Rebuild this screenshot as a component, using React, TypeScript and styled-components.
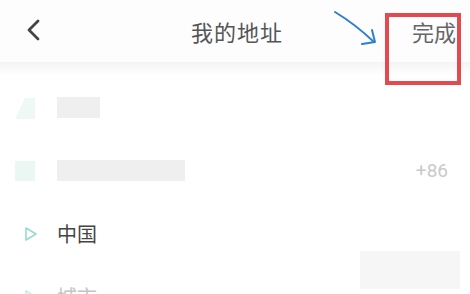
import React from "react";
import styled, { createGlobalStyle } from "styled-components";

const Global = createGlobalStyle`
  html, body { margin: 0; padding: 0; background: #ffffff; }
  body { font-family: "Noto Sans CJK SC", "Noto Sans", sans-serif; }
`;

const Screen = styled.div`
  position: relative;
  width: 470px;
  height: 294px;
  overflow: hidden;
  background: #ffffff;
`;

const Header = styled.div`
  height: 62px;
  display: grid;
  grid-template-columns: 80px 1fr 80px;
  align-items: center;
  background: #fdfdfd;
`;

const Back = styled.div`
  padding-left: 25px;
  padding-bottom: 2px;
  display: flex;
  align-items: center;
`;

const Title = styled.div`
  text-align: center;
  font-size: 22px;
  color: #555555;
  letter-spacing: 1px;
  padding-left: 4px;
`;

const Done = styled.div`
  text-align: right;
  padding-right: 14px;
  font-size: 22px;
  color: #666666;
`;

const Shade = styled.div`
  height: 14px;
  background: linear-gradient(#f4f4f4, #fbfbfb 60%, #ffffff);
`;

const List = styled.div`
  display: flex;
  flex-direction: column;
`;

const Row = styled.div`
  height: 63px;
  display: flex;
  align-items: center;
  padding: 0 22px 0 15px;
`;

const IconCell = styled.div`
  width: 42px;
  display: flex;
  align-items: center;
`;

const Blob = styled.div<{ $w: number }>`
  width: ${(p) => p.$w}px;
  height: 21px;
  background: #efefef;
`;

const Label = styled.div<{ $faint?: boolean }>`
  font-size: 20px;
  color: ${(p) => (p.$faint ? "#c4c4c4" : "#454545")};
`;

const Prefix = styled.div`
  margin-left: auto;
  font-family: Roboto, "Noto Sans", sans-serif;
  font-size: 19px;
  color: #c9c9c9;
`;

const Highlight = styled.div`
  position: absolute;
  left: 385px;
  top: 13px;
  width: 68px;
  height: 64px;
  border: 4px solid #e24a4f;
`;

const Arrow = styled.svg`
  position: absolute;
  left: 330px;
  top: 8px;
`;

const Redact = styled.div`
  position: absolute;
  left: 360px;
  top: 251px;
  width: 100px;
  height: 38px;
  background: #f6f6f6;
`;

const Tri = ({ faint }: { faint?: boolean }) => (
  <svg width="14" height="16" viewBox="0 0 14 16" style={{ marginLeft: 9 }}>
    <path
      d="M2 2 L12 8 L2 14 Z"
      fill="none"
      stroke={faint ? "#c7ece7" : "#9ad9d2"}
      strokeWidth="1.6"
      strokeLinejoin="round"
    />
  </svg>
);

export default function App() {
  return (
    <>
      <Global />
      <Screen>
        <Header>
          <Back>
            <svg width="16" height="24" viewBox="0 0 16 24">
              <path
                d="M13 3 L4 12 L13 21"
                fill="none"
                stroke="#444"
                strokeWidth="2.8"
                strokeLinecap="round"
                strokeLinejoin="round"
              />
            </svg>
          </Back>
          <Title>我的地址</Title>
          <Done>完成</Done>
        </Header>
        <Shade />
        <List>
          <Row>
            <IconCell>
              <svg width="20" height="22" viewBox="0 0 20 22">
                <path d="M10 1 L20 1 L20 22 L0 22 Z" fill="#eef8f5" />
              </svg>
            </IconCell>
            <Blob $w={43} />
          </Row>
          <Row>
            <IconCell>
              <svg width="20" height="20" viewBox="0 0 20 20">
                <rect width="20" height="20" fill="#eaf7f3" />
              </svg>
            </IconCell>
            <Blob $w={128} />
            <Prefix>+86</Prefix>
          </Row>
          <Row>
            <IconCell>
              <Tri />
            </IconCell>
            <Label>中国</Label>
          </Row>
          <Row>
            <IconCell>
              <Tri faint />
            </IconCell>
            <Label $faint>城市</Label>
          </Row>
        </List>
        <Redact />
        <Highlight />
        <Arrow width="50" height="40" viewBox="0 0 50 40">
          <path
            d="M5 4 Q25 16 44 34"
            fill="none"
            stroke="#2f7fd0"
            strokeWidth="2"
            strokeLinecap="round"
          />
          <path
            d="M32 36 L45 34 L42 22"
            fill="none"
            stroke="#2f7fd0"
            strokeWidth="2"
            strokeLinecap="round"
            strokeLinejoin="round"
          />
        </Arrow>
      </Screen>
    </>
  );
}
